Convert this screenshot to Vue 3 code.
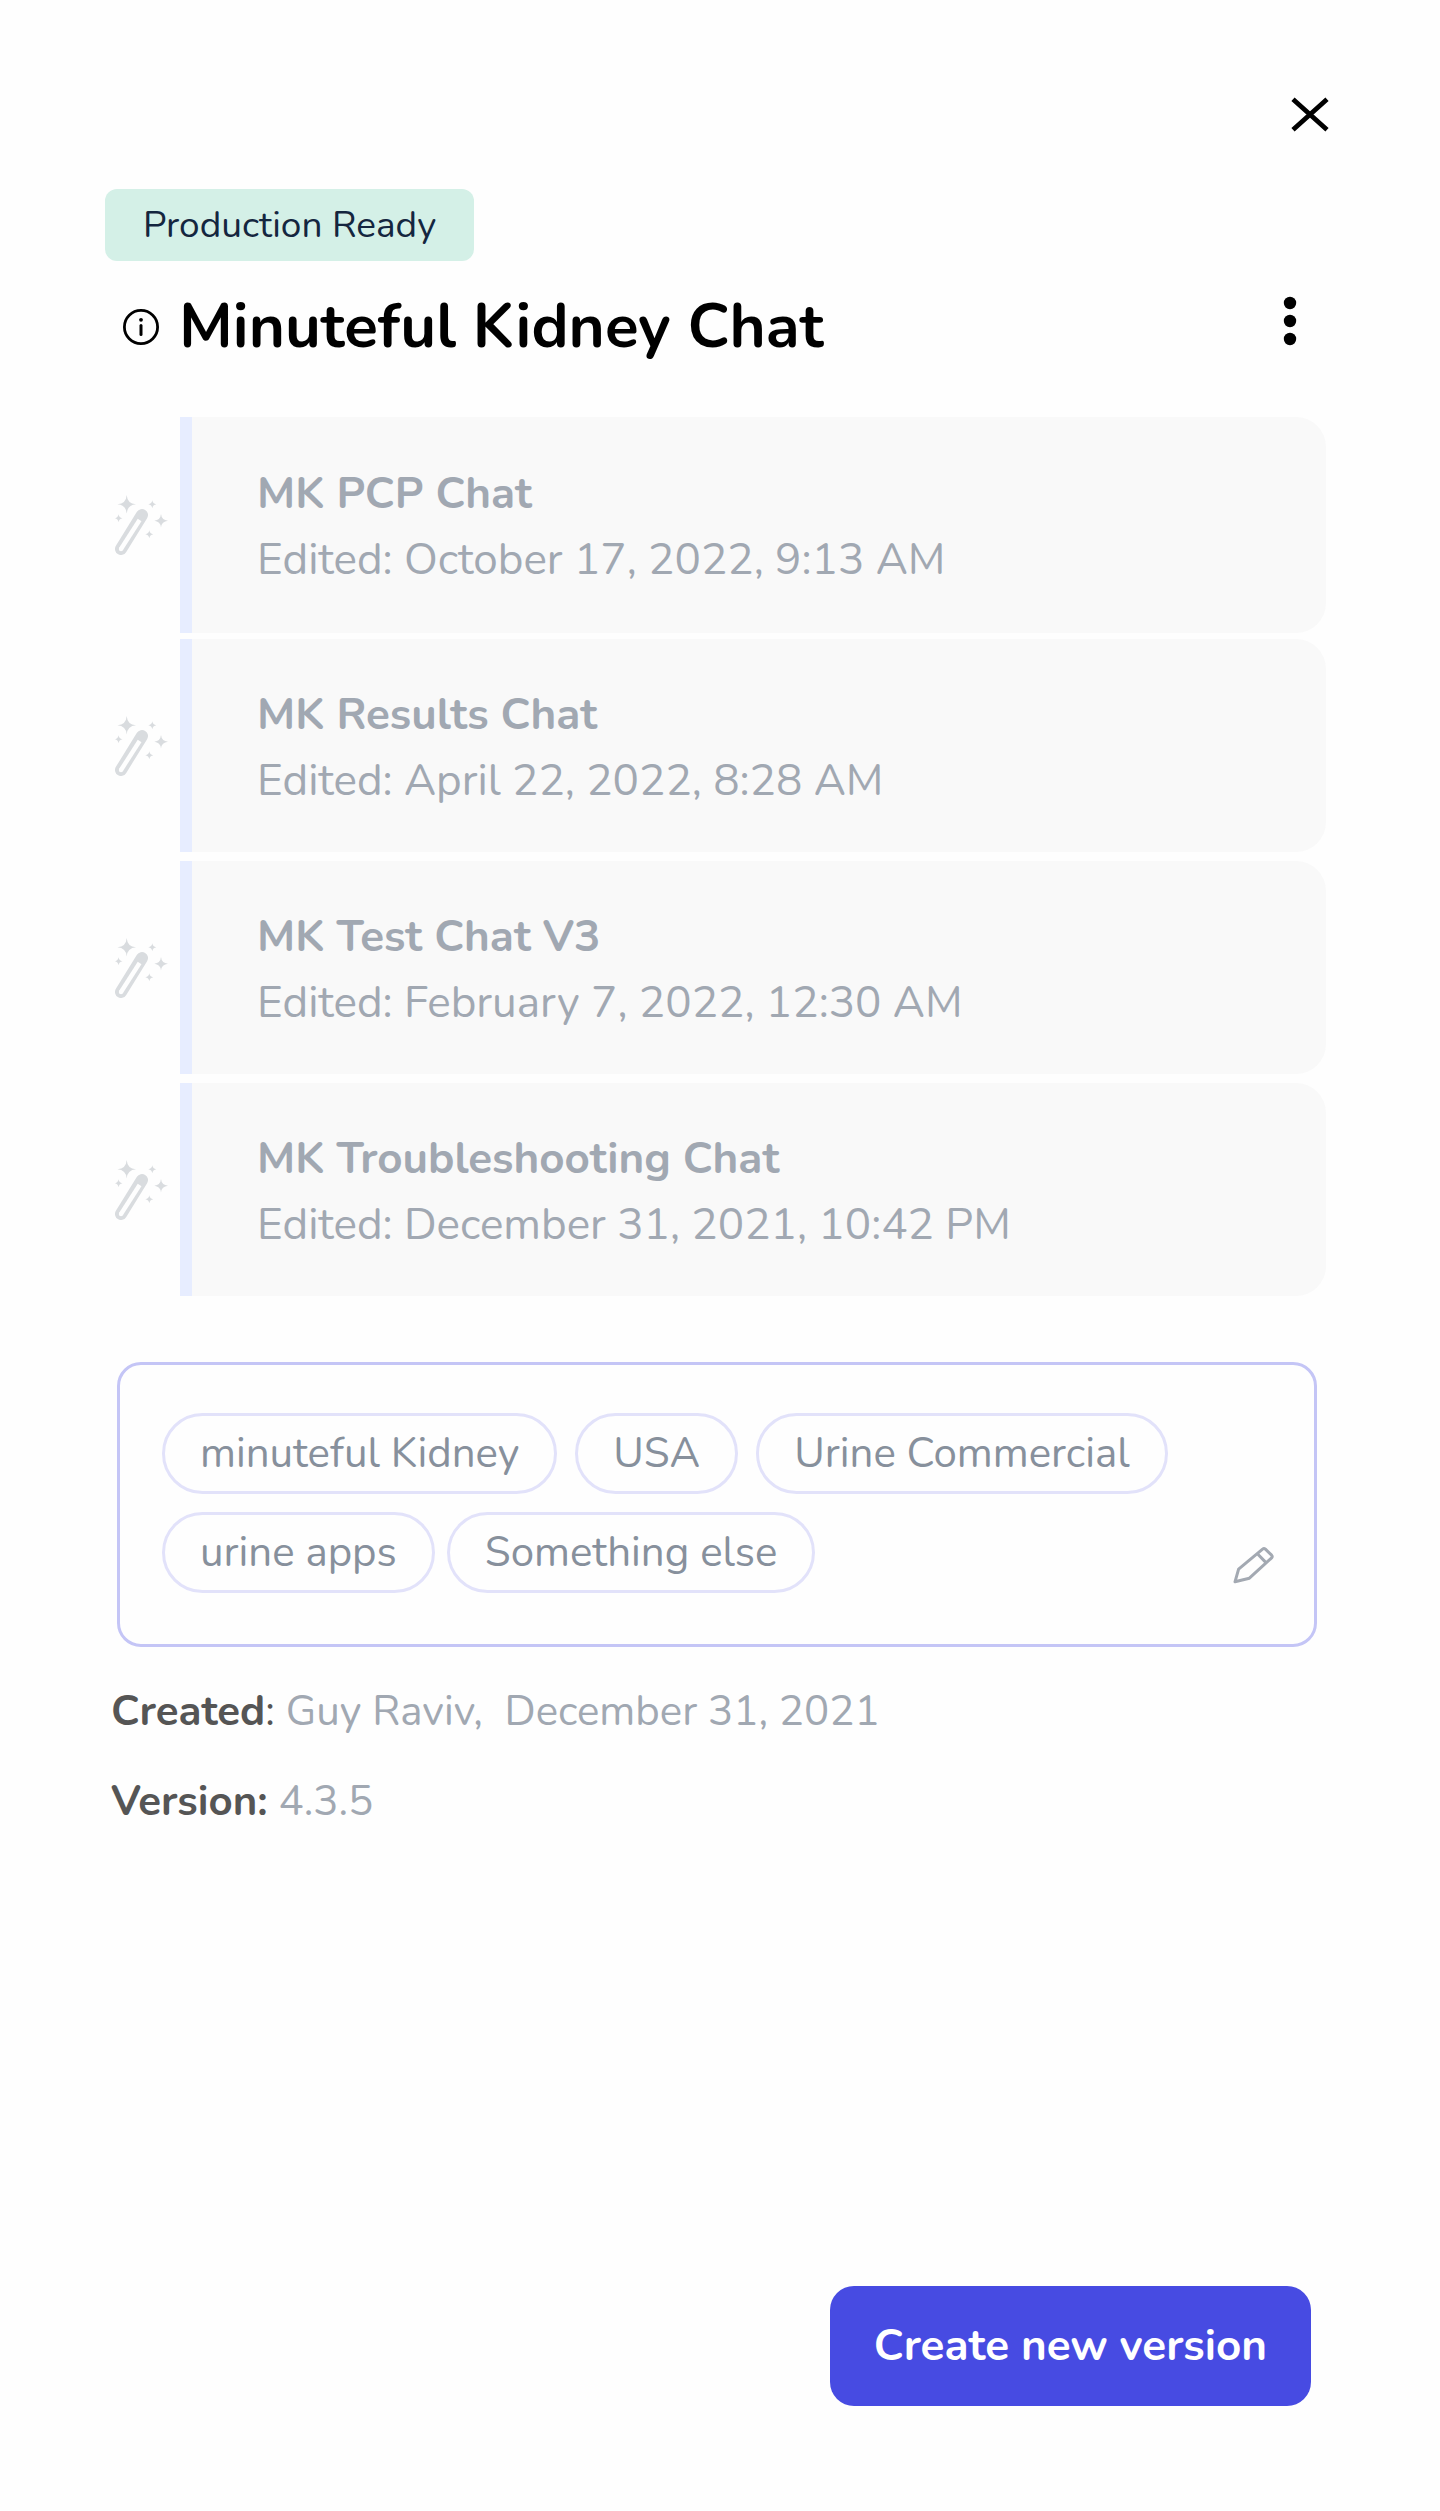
<script setup>
const chats = [
  { name: 'MK PCP Chat', edited: 'October 17, 2022, 9:13 AM' },
  { name: 'MK Results Chat', edited: 'April 22, 2022, 8:28 AM' },
  { name: 'MK Test Chat V3', edited: 'February 7, 2022, 12:30 AM' },
  { name: 'MK Troubleshooting Chat', edited: 'December 31, 2021, 10:42 PM' },
]

const tagRows = [
  ['minuteful Kidney', 'USA', 'Urine Commercial'],
  ['urine apps', 'Something else'],
]
</script>

<template>
  <main class="panel">
    <div class="top">
      <button class="icon-button" type="button" aria-label="Close">
        <svg width="38" height="36" viewBox="0 0 38 36">
          <path d="M2 3.2 36 33.8M36 3.2 2 33.8" fill="none" stroke="#000" stroke-width="4.8" />
        </svg>
      </button>
    </div>

    <span class="badge">Production Ready</span>

    <header class="heading">
      <svg class="info" width="36" height="36" viewBox="0 0 36 36" aria-hidden="true">
        <circle cx="18" cy="18" r="16.6" fill="none" stroke="#000" stroke-width="2.8" />
        <circle cx="18" cy="10.8" r="1.9" />
        <path d="M18 16.5V25.5" stroke="#000" stroke-width="3" stroke-linecap="round" />
      </svg>
      <h1>Minuteful Kidney Chat</h1>
      <button class="icon-button menu" type="button" aria-label="More options">
        <svg width="14" height="50" viewBox="0 0 14 50">
          <circle cx="7" cy="7" r="6.2" />
          <circle cx="7" cy="25" r="6.2" />
          <circle cx="7" cy="43" r="6.2" />
        </svg>
      </button>
    </header>

    <ul class="chats">
      <li v-for="chat in chats" :key="chat.name">
        <svg class="wand" width="54" height="60" viewBox="0 0 54 60" aria-hidden="true">
          <path d="M27 20 6 54" stroke="#d9dcdf" stroke-width="12" stroke-linecap="round" />
          <path d="M24.6 25 6 54" stroke="#fefefe" stroke-width="4.4" />
          <circle cx="6" cy="54" r="2.2" fill="#fefefe" />
          <g fill="#d9dcdf">
            <path d="M11.7 0Q12.3 8.7 21 9.3 12.3 9.9 11.7 18.6 11.1 9.9 2.4 9.3 11.1 8.7 11.7 0Z" />
            <path d="M46 19Q46.6 25.1 53 25.7 46.6 26.3 46 32.4 45.4 26.3 39.3 25.7 45.4 25.1 46 19Z" />
            <path d="M37.3 5.3Q37.8 8.8 41.3 9.3 37.8 9.8 37.3 13.3 36.8 9.8 33.3 9.3 36.8 8.8 37.3 5.3Z" />
            <path d="M3.5 19.3Q4 22.8 7.5 23.3 4 23.8 3.5 27.3 3 23.8 0 23.3 3 22.8 3.5 19.3Z" />
            <path d="M34.3 35.3Q34.8 38.8 38.3 39.3 34.8 39.8 34.3 43.3 33.8 39.8 30.3 39.3 33.8 38.8 34.3 35.3Z" />
          </g>
        </svg>
        <article class="card">
          <h2>{{ chat.name }}</h2>
          <p>Edited: {{ chat.edited }}</p>
        </article>
      </li>
    </ul>

    <section class="tags" aria-label="Tags">
      <div class="tag-rows">
        <div v-for="(row, i) in tagRows" :key="i" class="tag-row">
          <span v-for="tag in row" :key="tag" class="tag">{{ tag }}</span>
        </div>
      </div>
      <button class="icon-button edit" type="button" aria-label="Edit tags">
        <svg width="42" height="38" viewBox="0 0 42 38">
          <path
            d="M2 35.8 5.6 23.2 29.6 3.1Q31 2 32.4 3.2L38.6 9.2Q39.8 10.6 38.6 11.9L16.4 32.2ZM24.4 7.8 33 16.6"
            fill="none" stroke="#a3a9b2" stroke-width="3" stroke-linejoin="round"
          />
        </svg>
      </button>
    </section>

    <section class="meta">
      <p><strong>Created</strong><span class="colon">:</span> Guy Raviv,&nbsp; December 31, 2021</p>
      <p><strong>Version:</strong> 4.3.5</p>
    </section>

    <footer class="actions">
      <button class="primary" type="button">Create new version</button>
    </footer>
  </main>
</template>

<style>
body {
  background: #fefefe;
}
</style>

<style scoped>
.panel {
  box-sizing: border-box;
  display: flex;
  flex-direction: column;
  min-height: 100vh;
  padding: 96px 114px 105px 105px;
  color: #a1a8b2;
  font-family: Nunito, "Open Sans", "Noto Sans", sans-serif;
  font-size: 42px;
  line-height: 66px;
}

h1,
h2,
p,
ul {
  margin: 0;
  padding: 0;
}

.icon-button {
  display: flex;
  padding: 0;
  border: 0;
  background: none;
}

.top {
  display: flex;
  justify-content: flex-end;
  margin-right: -3px;
}

.badge {
  align-self: flex-start;
  margin-top: 57px;
  padding: 0 38px;
  border-radius: 12px;
  background: #d4f0e7;
  color: #14263f;
  font-size: 37px;
  line-height: 72px;
}

.heading {
  display: flex;
  margin-top: 24px;
  padding-left: 18px;
  line-height: 84px;
}

.info {
  align-self: center;
}

h1 {
  flex: 1;
  margin-left: 20px;
  color: #000;
  font-size: 62px;
  font-weight: 700;
}

.menu {
  height: 72px;
  align-items: center;
  margin-right: 29px;
}

.chats {
  display: grid;
  gap: 9px;
  margin-top: 48px;
  list-style: none;
}

.chats li {
  display: flex;
  align-items: center;
  gap: 11px;
  padding-left: 10px;
}

.card {
  flex: 1;
  padding: 43px 65px 38px;
  border-left: 12px solid #e7edff;
  border-radius: 0 30px 30px 0;
  background: #f9f9f9;
  font-size: 44px;
}

/* The newest chat stands slightly taller and closer to the next one. */
.chats li:first-child {
  margin-bottom: -3px;
}

.chats li:first-child .card {
  padding-block: 44px 40px;
}

h2 {
  font-size: 44px;
  font-weight: 700;
}

.tags {
  display: flex;
  justify-content: space-between;
  margin: 66px 9px 0 12px;
  padding: 48px 39px 51px 42px;
  border: 3px solid #c4c5f6;
  border-radius: 24px;
  color: #87909c;
}

.tag-rows {
  display: grid;
  gap: 18px;
}

.tag-row {
  display: flex;
  flex-wrap: wrap;
  gap: 18px;
}

.tag-row + .tag-row {
  column-gap: 12px;
}

.tag {
  padding: 0 35px;
  border: 3px solid #e2e2fa;
  border-radius: 41px;
  line-height: 75px;
}

.edit {
  align-self: flex-end;
  margin-bottom: 9px;
}

.meta {
  display: grid;
  gap: 24px;
  margin: 32px 0 66px 6px;
}

strong {
  color: #555;
  font-weight: 700;
}

.colon {
  color: #555;
}

.actions {
  display: flex;
  justify-content: flex-end;
  margin: auto 15px 0 0;
}

.primary {
  padding: 0 44px;
  border: 0;
  border-radius: 24px;
  background: #474be2;
  color: #fff;
  font: inherit;
  font-size: 44px;
  font-weight: 700;
  line-height: 120px;
}
</style>
